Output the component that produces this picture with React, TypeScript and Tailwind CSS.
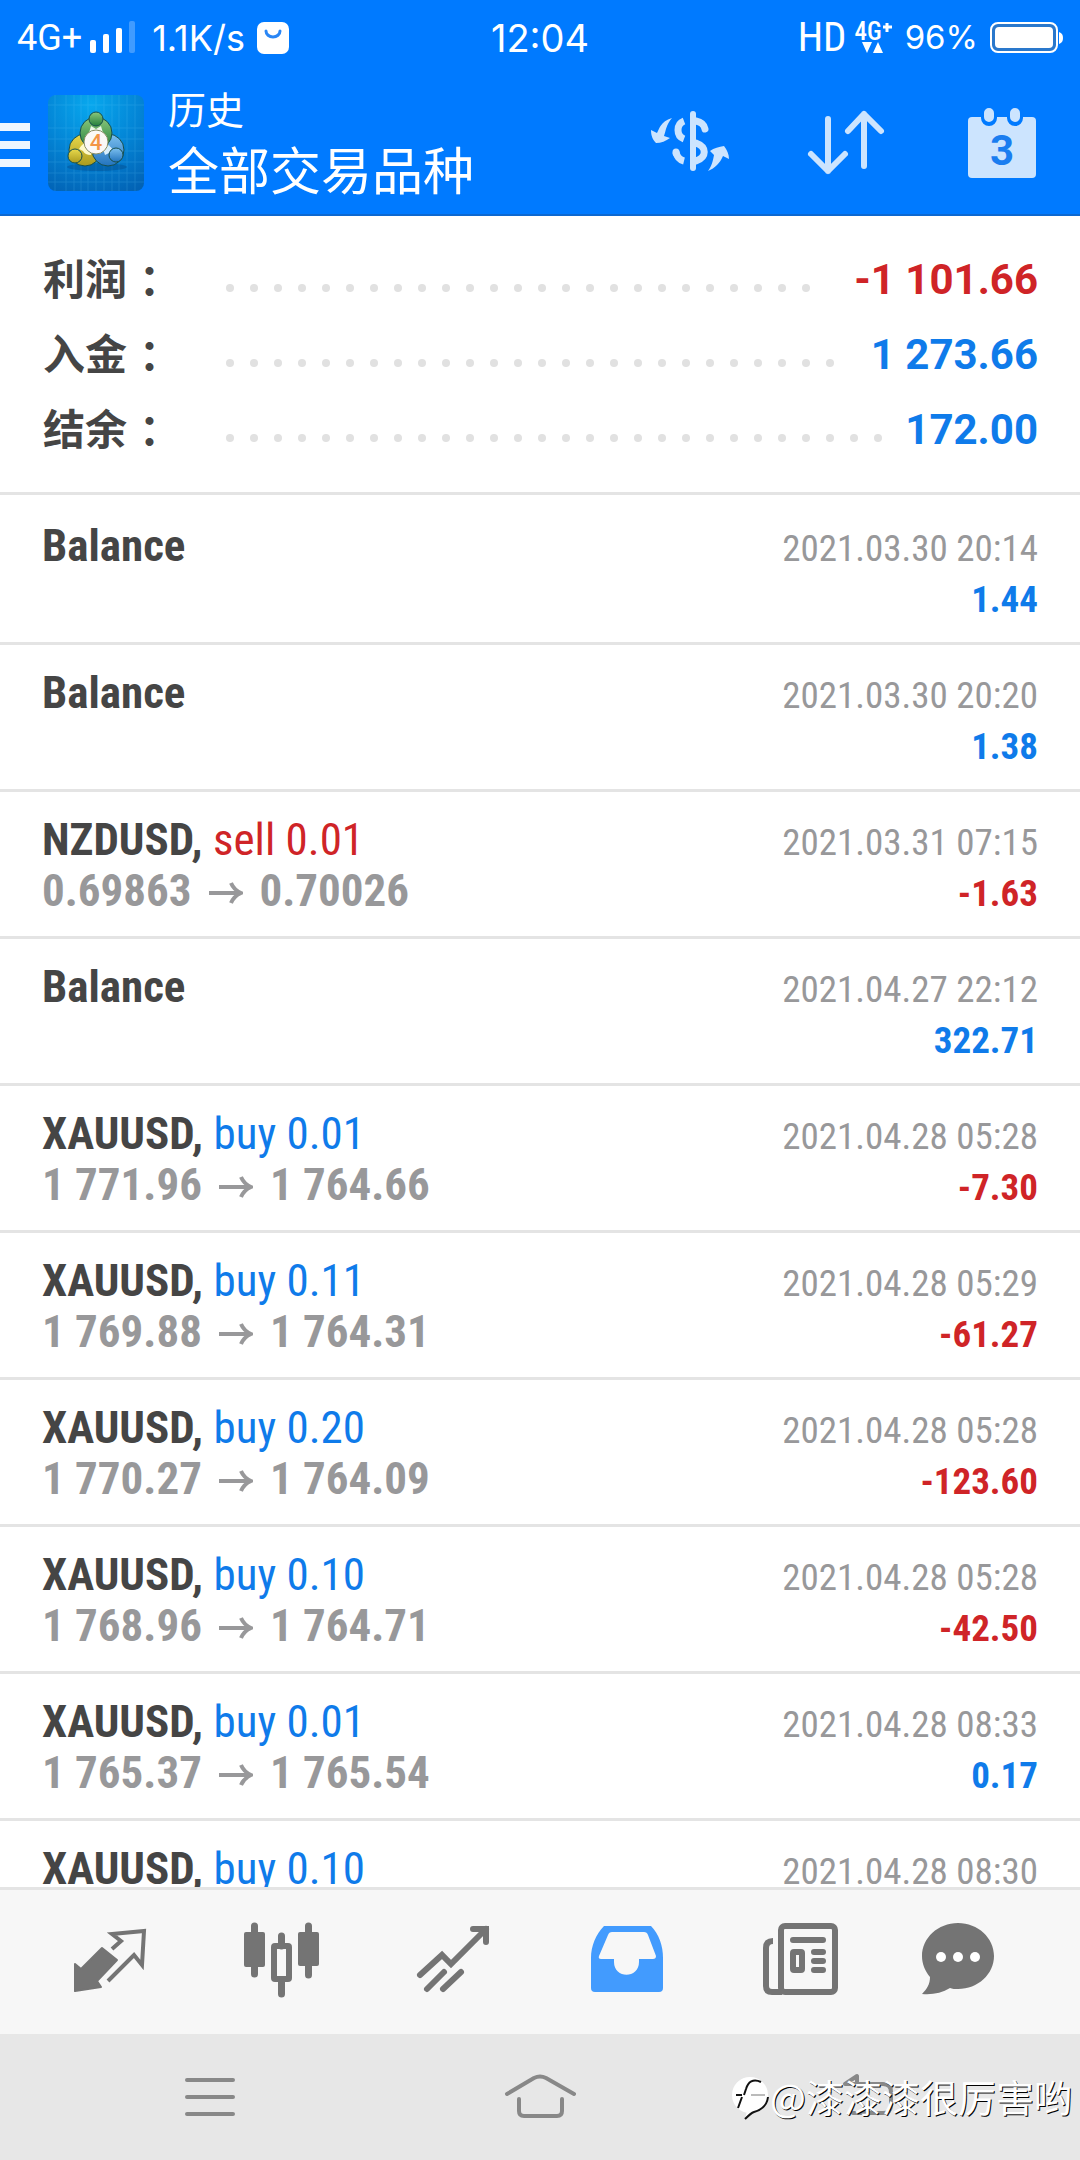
import type { ReactNode } from 'react';
import clsx from 'clsx';

interface Deal {
    symbol: string;
    side?: 'buy' | 'sell';
    volume?: string;
    open?: string;
    close?: string;
    time: string;
    profit: string;
}

const summary = [
    { label: '利润', value: '-1 101.66' },
    { label: '入金', value: '1 273.66' },
    { label: '结余', value: '172.00' },
];

const deals: Deal[] = [
    { symbol: 'Balance', time: '2021.03.30 20:14', profit: '1.44' },
    { symbol: 'Balance', time: '2021.03.30 20:20', profit: '1.38' },
    { symbol: 'NZDUSD', side: 'sell', volume: '0.01', open: '0.69863', close: '0.70026', time: '2021.03.31 07:15', profit: '-1.63' },
    { symbol: 'Balance', time: '2021.04.27 22:12', profit: '322.71' },
    { symbol: 'XAUUSD', side: 'buy', volume: '0.01', open: '1 771.96', close: '1 764.66', time: '2021.04.28 05:28', profit: '-7.30' },
    { symbol: 'XAUUSD', side: 'buy', volume: '0.11', open: '1 769.88', close: '1 764.31', time: '2021.04.28 05:29', profit: '-61.27' },
    { symbol: 'XAUUSD', side: 'buy', volume: '0.20', open: '1 770.27', close: '1 764.09', time: '2021.04.28 05:28', profit: '-123.60' },
    { symbol: 'XAUUSD', side: 'buy', volume: '0.10', open: '1 768.96', close: '1 764.71', time: '2021.04.28 05:28', profit: '-42.50' },
    { symbol: 'XAUUSD', side: 'buy', volume: '0.01', open: '1 765.37', close: '1 765.54', time: '2021.04.28 08:33', profit: '0.17' },
    { symbol: 'XAUUSD', side: 'buy', volume: '0.10', time: '2021.04.28 08:30', profit: '' },
];

const amountColor = (value: string) => (value.startsWith('-') ? 'text-[#cf2427]' : 'text-[#0f7bea]');

function StatusBar() {
    return (
        <div className="grid h-[72px] grid-cols-[1fr_auto_1fr] items-center px-[17px] pt-1 font-['Inter','Roboto',sans-serif] text-[33px]">
            <div className="flex items-center">
                <span className="font-['Roboto',sans-serif] text-[36px]">4G+</span>
                <svg width="46" height="36" viewBox="0 0 46 36" fill="currentColor" className="ml-2">
                    <rect x="0" y="20" width="6" height="13" rx="2" />
                    <rect x="13" y="14" width="6" height="19" rx="2" />
                    <rect x="26" y="8" width="6" height="25" rx="2" />
                    <rect x="39" y="1" width="6" height="32" rx="2" opacity="0.25" />
                </svg>
                <span className="ml-4 text-[36px]">1.1K/s</span>
                <svg width="32" height="32" viewBox="0 0 32 32" className="ml-3">
                    <rect width="32" height="32" rx="7" fill="currentColor" />
                    <path d="M9 9a7 6 0 0 0 14 0" fill="none" stroke="#2a86f5" strokeWidth="3" strokeLinecap="round" />
                </svg>
            </div>
            <span className="text-[38px]">12:04</span>
            <div className="flex items-center justify-end">
                <span className="font-['Roboto_Condensed','Roboto',sans-serif] text-[41px]">HD</span>
                <div className="ml-2 flex flex-col items-start font-['Roboto_Condensed','Roboto',sans-serif] text-[25px] leading-[20px] font-medium">
                    <span className="flex">
                        4G
                        <svg width="11" height="11" viewBox="0 0 11 11" stroke="currentColor" strokeWidth="3">
                            <path d="M5 1v9M1 5h9" />
                        </svg>
                    </span>
                    <svg width="22" height="12" viewBox="0 0 22 12" fill="currentColor" className="ml-2">
                        <path d="M0 0h10L5 11zM16 0l5 11H11z" />
                    </svg>
                </div>
                <span className="ml-3">96%</span>
                <svg width="73" height="32" viewBox="0 0 73 32" fill="none" className="ml-3">
                    <rect x="1" y="1" width="66" height="29" rx="7" fill="#2a78cc" stroke="currentColor" strokeWidth="2" />
                    <rect x="5" y="5" width="58" height="21" rx="4" fill="currentColor" />
                    <path d="M69 10c3 1 4 3 4 6s-1 5-4 6z" fill="currentColor" />
                </svg>
            </div>
        </div>
    );
}

function Logo() {
    return (
        <svg width="96" height="96" viewBox="0 0 96 96">
            <defs>
                <radialGradient id="tile" cx="0.45" cy="0.1" r="1">
                    <stop offset="0" stopColor="#08a8ee" />
                    <stop offset="0.5" stopColor="#0385d6" />
                    <stop offset="1" stopColor="#0262b4" />
                </radialGradient>
                <linearGradient id="green" x2="0" y2="1">
                    <stop offset="0" stopColor="#8cc87c" />
                    <stop offset="1" stopColor="#237f3c" />
                </linearGradient>
                <linearGradient id="yellow" x2="0" y2="1">
                    <stop offset="0" stopColor="#e8d94c" />
                    <stop offset="1" stopColor="#ab9a1e" />
                </linearGradient>
                <linearGradient id="blue" x2="0" y2="1">
                    <stop offset="0" stopColor="#7cc0f0" />
                    <stop offset="1" stopColor="#2273bd" />
                </linearGradient>
            </defs>
            <rect width="96" height="96" rx="8" fill="url(#tile)" />
            <path
                d="M7 0v96M18 0v96M26 0v96M33 0v96M40 0v96M48 0v96M56 0v96M64 0v96M71 0v96M79 0v96M87 0v96M0 10h96M0 33h96M0 44h96M0 56h96M0 67h96M0 78h96M0 87h96"
                stroke="#6fd0ff"
                strokeWidth="1"
                opacity="0.18"
            />
            <ellipse cx="49" cy="72" rx="30" ry="4" fill="#04396f" opacity="0.3" />
            <g stroke="#174f4d" strokeWidth="1">
                <circle cx="37" cy="55" r="16" fill="url(#yellow)" />
                <circle cx="60" cy="55" r="16" fill="url(#blue)" />
                <circle cx="48" cy="38" r="16" fill="url(#green)" />
                <path d="M31 54q5-8 11-8l1 14q-6 0-8-4z" fill="#fdf9c8" stroke="none" />
                <path d="M43 31l5 3 5-3 2 7H41z" fill="#edf8e9" stroke="none" />
                <path d="M53 48q10 1 12 8l-8 4z" fill="#d9effc" stroke="none" />
                <circle cx="48" cy="24" r="7" fill="url(#green)" />
                <circle cx="27" cy="61" r="7" fill="url(#yellow)" />
                <circle cx="68" cy="60" r="7" fill="url(#blue)" />
            </g>
            <circle cx="48" cy="47" r="12" fill="#fbf9f7" stroke="#8a8f66" strokeWidth="1" />
            <text x="48" y="55" textAnchor="middle" fill="#f39546" className="font-['Roboto',sans-serif] text-[22px] font-medium">4</text>
        </svg>
    );
}

function HeaderButton({ label, children }: { label: string; children: ReactNode }) {
    return (
        <button type="button" aria-label={label} className="flex h-full w-[156px] items-center justify-center text-[#cce4fe]">
            <svg width="96" height="96" viewBox="0 0 96 96" fill="none" stroke="currentColor" strokeWidth="6" strokeLinecap="round" strokeLinejoin="round">
                {children}
            </svg>
        </button>
    );
}

function Header() {
    return (
        <header className="border-b-2 border-[#0d68d0] bg-[#007aff] text-white">
            <StatusBar />
            <div className="flex h-[142px] items-center">
                <button type="button" aria-label="Menu" className="mt-1 flex w-[30px] flex-col gap-[10px]">
                    <span className="h-2 bg-[#eef6ff]" />
                    <span className="h-2 bg-[#eef6ff]" />
                    <span className="h-2 bg-[#eef6ff]" />
                </button>
                <div className="ml-[18px]">
                    <Logo />
                </div>
                <div className="ml-6 flex-1 pb-1 font-['Noto_Sans_CJK_SC',sans-serif]">
                    <p className="text-[38px] leading-[54px]">历史</p>
                    <h1 className="text-[51px] leading-[66px]">全部交易品种</h1>
                </div>
                <HeaderButton label="Currency">
                    <path d="M51 19v54" />
                    <path d="M42 26c-8 3-8 15 0 18M34 57c1 5 4 8 8 9" strokeWidth="7" strokeLinecap="butt" />
                    <path d="M34 57v1M63 34c-1-5-4-7-9-8M54 48c11 4 11 14 0 18" strokeWidth="7" />
                    <path d="M30 23c-12 4-12 10-15 15l-6-3c0 6 2 10 5 13 5 0 10-2 14-5l-6-2c2-6 2-11 8-18zM66 76c4-5 5-11 6-16l-4-4c4-3 9-4 14-5 3 4 5 8 5 13l-6-3c-3 7-8 12-15 15z" fill="currentColor" stroke="none" />
                </HeaderButton>
                <HeaderButton label="Sort">
                    <path d="M30 24v52M13 59l17 17 17-17M66 71V19M50 36l16-17 17 17" />
                </HeaderButton>
                <HeaderButton label="Period">
                    <rect x="14" y="22" width="68" height="61" rx="4" fill="currentColor" stroke="none" />
                    <path d="M35 18v5M61 18v5" stroke="#007aff" strokeWidth="16" />
                    <path d="M35 18v4M61 18v4" strokeWidth="10" />
                    <text x="48" y="70" textAnchor="middle" fill="#1a7df0" stroke="none" className="font-['Roboto',sans-serif] text-[42px] font-bold">3</text>
                </HeaderButton>
            </div>
        </header>
    );
}

function Summary() {
    return (
        <dl className="border-b-[3px] border-[#e4e4e4] pt-[26px] pr-[42px] pb-[25px] pl-[43px]">
            {summary.map(({ label, value }) => (
                <div key={label} className="flex h-[75px] items-center gap-[22px]">
                    <dt className="w-[161px] pb-[6px] font-['Noto_Sans_CJK_SC',sans-serif] text-[42px] font-bold text-[#454545]">
                        {label}
                        <span className="pl-3">：</span>
                    </dt>
                    {/* dotted leader, only whole dots stay visible */}
                    <div aria-hidden="true" className="mt-4 flex h-2 flex-1 flex-wrap gap-4 overflow-hidden">
                        {Array.from({ length: 32 }, (_, i) => (
                            <span key={i} className="size-2 rounded-full bg-[#e1e1e1]" />
                        ))}
                    </div>
                    <dd className={clsx("font-['Roboto',sans-serif] text-[42px] font-bold", amountColor(value))}>{value}</dd>
                </div>
            ))}
        </dl>
    );
}

function DealRow({ deal }: { deal: Deal }) {
    return (
        <li className="flex h-[147px] justify-between border-b-[3px] border-[#e4e4e4] px-[42px] leading-[51px]">
            <div className="pt-[22px] text-[45px] font-bold">
                <p className="text-[#454545]">
                    {deal.symbol}
                    {deal.side && (
                        <>
                            ,{' '}
                            <span className={clsx('font-normal', deal.side === 'sell' ? 'text-[#cf2427]' : 'text-[#0f7bea]')}>
                                {deal.side} {deal.volume}
                            </span>
                        </>
                    )}
                </p>
                {deal.open && (
                    <p className="flex items-center text-[#98989a]">
                        {deal.open}
                        <svg width="34" height="24" viewBox="0 0 34 24" fill="none" stroke="currentColor" strokeWidth="4" className="mx-[17px] mt-1">
                            <path d="M0 12h31M22 2q3 7 10 10-7 3-10 10" />
                        </svg>
                        {deal.close}
                    </p>
                )}
            </div>
            <div className="pt-[25px] text-right text-[37px]">
                <p className="text-[#98989a]">{deal.time}</p>
                <p className={clsx('font-bold', amountColor(deal.profit))}>{deal.profit}</p>
            </div>
        </li>
    );
}

function Tab({ label, active, children }: { label: string; active?: boolean; children: ReactNode }) {
    return (
        <button
            type="button"
            aria-label={label}
            className={clsx('flex flex-1 items-center justify-center', active ? 'text-[#429bfe]' : 'text-[#747474]')}
        >
            <svg width="96" height="96" viewBox="0 0 96 96" fill="none" stroke="currentColor" strokeLinecap="round">
                {children}
            </svg>
        </button>
    );
}

function TabBar() {
    return (
        <nav className="flex h-[147px] border-t-[3px] border-[#e4e4e4] bg-[#f7f7f7] px-6">
            <Tab label="Quotes">
                <path d="M13 50l6 5 21-21 15 12-20 21 4 6-26 4z" fill="currentColor" strokeWidth="2" strokeLinejoin="round" />
                <path d="M50 35l9-8-9-7 32-3-2 34-8-10-26 26" strokeWidth="4" strokeLinecap="butt" />
            </Tab>
            <Tab label="Charts">
                <path d="M20.500 12v48M74.500 12v49M47.500 22v10M47.500 66v14" strokeWidth="7" />
                <rect x="10" y="18" width="21" height="35" rx="2" fill="currentColor" stroke="none" />
                <rect x="64" y="18" width="21" height="34" rx="2" fill="currentColor" stroke="none" />
                <rect x="40" y="32" width="15" height="33" rx="1" strokeWidth="6" />
            </Tab>
            <Tab label="Trade">
                <path d="M14 61l22-20 9 9 35-35M67 15h13v13M21 75l17-17M37 75l18-17" strokeWidth="6" />
            </Tab>
            <Tab label="History" active>
                <path
                    d="M26 12h47c8 8 12 20 12 32v30q0 4-4 4H17q-4 0-4-4V44c0-12 5-24 13-32zM34 18q-3 0-4 3l-9 21q-1 3 2 3h13v3c0 17 25 17 25 0v-3h14q3 0 3-3l-8-21q-1-3-4-3z"
                    fill="currentColor"
                    fillRule="evenodd"
                    stroke="none"
                />
            </Tab>
            <Tab label="News">
                <rect x="31" y="12" width="54" height="66" rx="4" strokeWidth="6" />
                <path d="M23 27q-7 0-7 7v38q0 6 6 6h10" strokeWidth="6" strokeLinecap="butt" />
                <path d="M43 26h30M64 38h9M64 47h9M64 56h9" strokeWidth="6" />
                <rect x="43" y="38" width="9" height="18" rx="1" strokeWidth="6" />
            </Tab>
            <Tab label="Messages">
                <path d="M36 9c20 0 36 15 36 33S56 75 36 75c-3 0-6 0-8-1-8 5-18 7-28 6 5-5 8-10 8-17-5-6-8-13-8-21C0 24 16 9 36 9z" fill="currentColor" stroke="none" />
                <g fill="#ffffff" stroke="none">
                    <circle cx="19" cy="43" r="5" />
                    <circle cx="36" cy="43" r="5" />
                    <circle cx="53" cy="43" r="5" />
                </g>
            </Tab>
        </nav>
    );
}

function SystemButton({ label, d }: { label: string; d: string }) {
    return (
        <button type="button" aria-label={label} className="flex items-center justify-center text-[#888888]">
            <svg width="72" height="72" viewBox="0 0 72 72" fill="none" stroke="currentColor" strokeWidth="4" strokeLinecap="round" strokeLinejoin="round">
                <path d={d} />
            </svg>
        </button>
    );
}

function SystemBar() {
    return (
        <div className="relative grid h-[126px] grid-cols-3 bg-[#e7e7e7] px-[46px]">
            <SystemButton label="Recent apps" d="M12 19h46M12 36h46M12 53h46" />
            <SystemButton label="Home" d="M3 33l27-16q6-3 12 0l28 16M15 38v12q0 5 5 5h33q5 0 5-5V38" />
            <SystemButton label="Back" d="M24 15v8H12zM20 23h30q8 0 8 8v13q0 8-8 8H20" />
            <div className="absolute inset-y-0 right-2 flex items-center pb-1">
                <svg width="40" height="48" viewBox="0 0 40 48" fill="none" className="mt-2">
                    <circle cx="20" cy="20" r="18" fill="#ffffff" />
                    <path d="M38 22c-1 9-7 13-14 15-3 1-6 4-9 7l3-12 8-12z" fill="#ffffff" />
                    <path d="M38 22c-1 9-7 13-14 15-3 1-6 4-9 7" stroke="#111111" strokeWidth="2" />
                    <path d="M31 7c-8-4-13 0-15 7l-2 6M12 22L8 33M6 20h6" stroke="#111111" strokeWidth="2" />
                    <path d="M21 20h14" stroke="#bbbbbb" strokeWidth="2" />
                </svg>
                <span className="font-['Noto_Sans_CJK_SC',sans-serif] text-[38px] text-white [text-shadow:1px_1px_0_#000000]">@漆漆漆很厉害哟</span>
            </div>
        </div>
    );
}

export default function App() {
    return (
        <div className="flex h-screen flex-col bg-white">
            <Header />
            <Summary />
            <ul className="min-h-0 flex-1 overflow-hidden pt-[3px] font-['Roboto_Condensed','Roboto',sans-serif]">
                {deals.map((deal, i) => (
                    <DealRow key={i} deal={deal} />
                ))}
            </ul>
            <TabBar />
            <SystemBar />
        </div>
    );
}
